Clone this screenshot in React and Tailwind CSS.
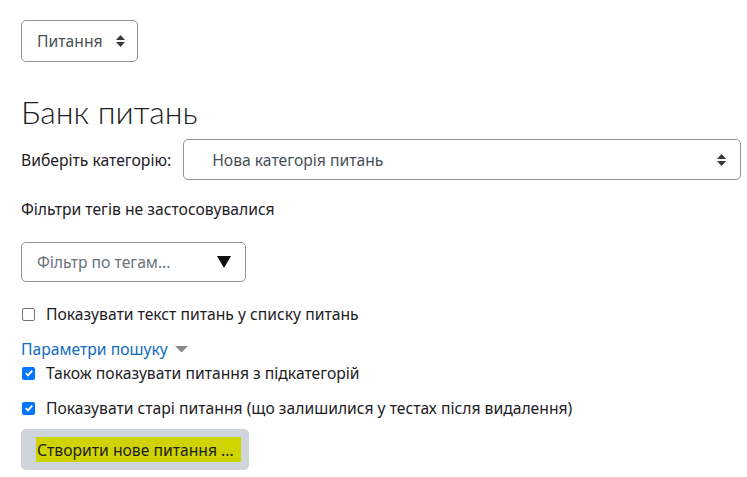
import React from 'react';

function SortIcon({ className }) {
  return (
    <svg className={className} width="9" height="12" viewBox="0 0 9 12">
      <path d="M4.5 0 L9 5 H0 Z M4.5 12 L9 7 H0 Z" fill="#343a40" />
    </svg>
  );
}

function Check({ checked, label }) {
  return (
    <label className="flex items-center gap-[11px] h-[24px]">
      {checked ? (
        <span className="ml-[1px] w-[13px] h-[13px] rounded-[2px] bg-[#0075ff] flex items-center justify-center">
          <svg width="10" height="10" viewBox="0 0 10 10">
            <path d="M1.8 5.2 L4 7.4 L8.3 2.6" stroke="white" strokeWidth="1.9" fill="none" />
          </svg>
        </span>
      ) : (
        <span className="ml-[1px] w-[13px] h-[13px] rounded-[2px] border border-[#767676] bg-white" />
      )}
      <span>{label}</span>
    </label>
  );
}

export default function App() {
  return (
    <div
      className="min-h-[477px] bg-white text-[15.7px] leading-[24px] text-[#1d2125] pl-[21px] pr-[6px] pt-[20px]"
      style={{ fontFamily: '"Noto Sans", "Open Sans", sans-serif' }}
    >
      <button className="h-[42px] w-[117px] border border-[#8f959e] rounded-[5px] flex items-center pl-[15px] text-[#495057]">
        <span>Питання</span>
        <SortIcon className="ml-[13px]" />
      </button>

      <h2
        className="mt-[31px] text-[32px] font-light leading-[38px]"
        style={{ fontFamily: 'Lato, "Noto Sans", sans-serif' }}
      >
        Банк питань
      </h2>

      <div className="mt-[8px] flex items-center gap-[12px]">
        <span>Виберіть категорію:</span>
        <div className="flex-1 h-[41px] border border-[#8f959e] rounded-[5px] flex items-center pl-[28px] pr-[14px] text-[#495057]">
          <span className="flex-1">Нова категорія питань</span>
          <SortIcon />
        </div>
      </div>

      <p className="mt-[17px]">Фільтри тегів не застосовувалися</p>

      <div className="mt-[21px] w-[225px] h-[40px] border border-[#8f959e] rounded-[5px] flex items-center pl-[15px] pr-[14px] text-[#6a737b]">
        <span className="flex-1">Фільтр по тегам...</span>
        <svg width="14" height="12" viewBox="0 0 14 12">
          <path d="M0 0 H14 L7 12 Z" fill="#111" />
        </svg>
      </div>

      <div className="mt-[20px]">
        <Check label="Показувати текст питань у списку питань" />
      </div>

      <div className="mt-[11px] flex items-center gap-[7px] text-[#0f6cbf] h-[24px]">
        <span>Параметри пошуку</span>
        <svg width="13" height="7" viewBox="0 0 13 7">
          <path d="M0 0 H13 L6.5 6.5 Z" fill="#8a8a8a" />
        </svg>
      </div>

      <Check checked label="Також показувати питання з підкатегорій" />

      <div className="mt-[11px]">
        <Check checked label="Показувати старі питання (що залишилися у тестах після видалення)" />
      </div>

      <button className="mt-[9px] h-[41px] w-[228px] bg-[#ced4da] rounded-[5px] flex items-center pl-[15px]">
        <span className="bg-[#cfd400] h-[25px] pl-[1px] pr-[7px] flex items-center">Створити нове питання ...</span>
      </button>
    </div>
  );
}
